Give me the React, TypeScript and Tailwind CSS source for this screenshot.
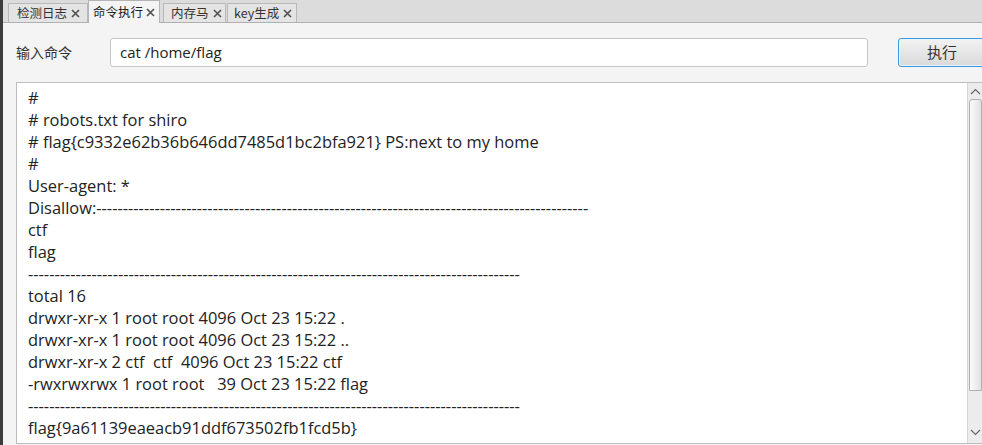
import React from "react";

const DASH = "-".repeat(93);

const lines = [
  "#",
  "# robots.txt for shiro",
  "# flag{c9332e62b36b646dd7485d1bc2bfa921} PS:next to my home",
  "#",
  "User-agent: *",
  "Disallow:" + DASH,
  "ctf",
  "flag",
  DASH,
  "total 16",
  "drwxr-xr-x 1 root root 4096 Oct 23 15:22 .",
  "drwxr-xr-x 1 root root 4096 Oct 23 15:22 ..",
  "drwxr-xr-x 2 ctf  ctf  4096 Oct 23 15:22 ctf",
  "-rwxrwxrwx 1 root root   39 Oct 23 15:22 flag",
  DASH,
  "flag{9a61139eaeacb91ddf673502fb1fcd5b}",
];

function CloseX() {
  return (
    <svg width="9" height="9" viewBox="0 0 9 9" className="shrink-0">
      <path d="M1 1 L8 8 M8 1 L1 8" stroke="#505050" strokeWidth="1.6" />
    </svg>
  );
}

export default function App() {
  const cjk = { fontFamily: '"Noto Sans CJK SC", "Noto Sans", sans-serif' };
  return (
    <div
      className="w-[982px] h-[445px] overflow-hidden flex bg-[#f4f4f4]"
      style={{ fontFamily: '"Open Sans", "Noto Sans CJK SC", sans-serif' }}
    >
      <div className="w-[3px] shrink-0 bg-[#3c3c3c]" />
      <div className="flex-1 min-w-0 flex flex-col">
        <div
          className="h-[23px] shrink-0 bg-[#dcdcdc] border-b border-[#b0b0b0] flex items-end pl-[5px] text-[12.5px]"
          style={cjk}
        >
          <div className="w-[80px] h-[19px] flex items-center gap-[4px] pl-[8px] bg-[#e4e4e4] border border-b-0 border-[#b8b8b8] text-[#333]">
            <span className="leading-none">检测日志</span>
            <CloseX />
          </div>
          <div className="w-[72px] h-[23px] -mb-px flex items-center gap-[3px] pl-[4px] bg-[#f4f4f4] border border-b-0 border-[#b4b4b4] text-[#222]">
            <span className="leading-none">命令执行</span>
            <CloseX />
          </div>
          <div className="ml-[3px] w-[63px] h-[19px] flex items-center gap-[4px] pl-[7px] bg-[#e4e4e4] border border-b-0 border-[#b8b8b8] text-[#333]">
            <span className="leading-none">内存马</span>
            <CloseX />
          </div>
          <div className="ml-[1px] w-[70px] h-[19px] flex items-center gap-[4px] pl-[6px] bg-[#e4e4e4] border border-b-0 border-[#b8b8b8] text-[#333]">
            <span className="leading-none">key生成</span>
            <CloseX />
          </div>
        </div>
        <div className="mt-[15px] h-[29px] shrink-0 flex items-center pl-[13px]">
          <div className="w-[94px] shrink-0 text-[14px] text-[#333]" style={cjk}>
            输入命令
          </div>
          <div className="w-[758px] shrink-0 h-[29px] bg-white border border-[#c6c6c6] rounded-[3px] flex items-center pl-[9px] text-[15px] text-[#222]">
            cat /home/flag
          </div>
          <div
            className="ml-[30px] w-[88px] h-[29px] shrink-0 rounded-[3px] border border-[#3c9be0] bg-gradient-to-b from-[#f2f2f2] to-[#dadada] shadow-[inset_0_0_0_1px_#e8f3fb] flex items-center justify-center text-[15px] text-[#333]"
            style={cjk}
          >
            执行
          </div>
        </div>
        <div className="mt-[15px] ml-[13px] h-[362px] shrink-0 bg-white border border-r-0 border-[#bdbdbd] flex">
          <div className="flex-1 min-w-0 pl-[11px] pt-[4px] text-[16.45px] leading-[22px] text-[#222] whitespace-pre overflow-hidden">
            {lines.map((l, i) => (
              <div key={i}>{l}</div>
            ))}
          </div>
          <div className="w-[15px] shrink-0 bg-[#ececec] border-l border-[#d6d6d6] flex flex-col items-center">
            <div className="h-[16px] flex items-center justify-center">
              <svg width="11" height="7" viewBox="0 0 11 7">
                <path d="M1 6 L5.5 1.5 L10 6" stroke="#666" strokeWidth="1.2" fill="none" />
              </svg>
            </div>
            <div className="w-[13px] h-[292px] rounded-t-[3px] border border-[#b0b0b0] bg-gradient-to-r from-[#fbfbfb] to-[#e2e2e2]" />
            <div className="flex-1" />
            <div className="h-[22px] flex items-center justify-center">
              <svg width="11" height="7" viewBox="0 0 11 7">
                <path d="M1 1 L5.5 5.5 L10 1" stroke="#666" strokeWidth="1.2" fill="none" />
              </svg>
            </div>
          </div>
        </div>
      </div>
    </div>
  );
}
